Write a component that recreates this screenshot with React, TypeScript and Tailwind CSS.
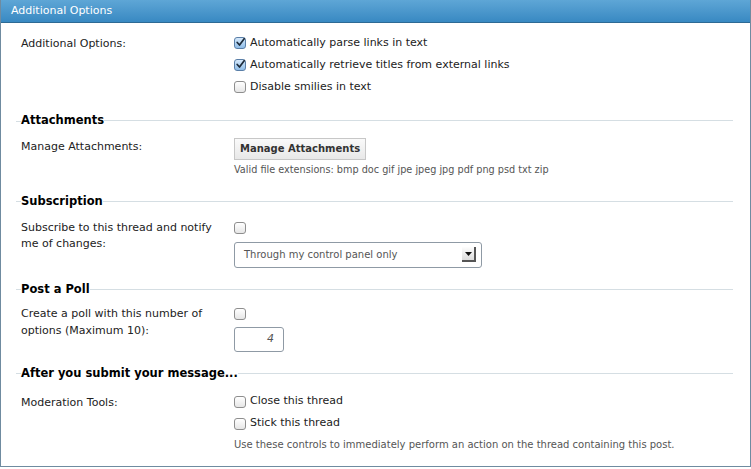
import * as React from 'react'

const font = { fontFamily: '"DejaVu Sans", Verdana, sans-serif' }

function Box({ checked = false }: { checked?: boolean }) {
    return (
        <span
            className={
                'inline-flex items-center justify-center w-[12px] h-[12px] shrink-0 rounded-[3px] border ' +
                (checked
                    ? 'border-[#5a7fa8] bg-gradient-to-b from-[#d6e9fb] to-[#8fbde8]'
                    : 'border-[#8e8e8e] bg-gradient-to-b from-[#ffffff] to-[#e6e6e6]')
            }
        >
            {checked && (
                <svg width="11" height="11" viewBox="0 0 11 11" className="-mt-[2px] ml-[1px]">
                    <path d="M1.5 5.5 L4.3 8.6 L10 0.8" fill="none" stroke="#1d2c3c" strokeWidth="2.1" strokeLinecap="round" strokeLinejoin="round" />
                </svg>
            )}
        </span>
    )
}

function Check({ label, checked }: { label: string; checked?: boolean }) {
    return (
        <div className="flex items-center gap-[4px] h-[22px] text-[11px] text-[#222]">
            <Box checked={checked} />
            <span>{label}</span>
        </div>
    )
}

function Legend({ title }: { title: string }) {
    return (
        <div className="flex items-center pl-[15px] pr-[17px] h-[22px]">
            <div className="w-[5px] h-px bg-[#d5dee3]" />
            <span className="text-[11.5px] font-bold text-black leading-none">{title}</span>
            <div className="flex-1 h-px bg-[#d5dee3] -mt-px" />
        </div>
    )
}

function Row({ label, labelClass, children }: { label: React.ReactNode; labelClass: string; children: React.ReactNode }) {
    return (
        <div className="flex pl-[20px]">
            <div className={'w-[213px] text-[11px] text-[#222] ' + labelClass}>{label}</div>
            <div className="flex-1">{children}</div>
        </div>
    )
}

export default function App() {
    return (
        <div className="w-[751px] h-[469px] bg-white" style={font}>
            <div className="h-[467px] border border-t-0 border-[#6f8ba0] flex flex-col">
                <div className="h-[23px] bg-gradient-to-b from-[#5ea6d6] to-[#3889c2] border-b border-[#2d6a94] flex items-center pl-[10px] text-[11px] text-white">
                    Additional Options
                </div>

                <div className="pt-[9px]">
                    <Row label="Additional Options:" labelClass="leading-[17px] pt-[3px]">
                        <Check label="Automatically parse links in text" checked />
                        <Check label="Automatically retrieve titles from external links" checked />
                        <Check label="Disable smilies in text" />
                    </Row>
                </div>

                <div className="mt-[12px]">
                    <Legend title="Attachments" />
                    <Row label="Manage Attachments:" labelClass="leading-[17px] pt-[6px]">
                        <div className="pt-[3px]">
                            <div className="inline-flex items-center h-[22px] px-[5px] border border-[#c7c7c7] bg-gradient-to-b from-[#fafafa] to-[#e8e8e8] text-[10px] font-bold text-[#333]">
                                Manage Attachments
                            </div>
                            <div className="text-[9.7px] leading-[12px] text-[#555] mt-[4px]">
                                Valid file extensions: bmp doc gif jpe jpeg jpg pdf png psd txt zip
                            </div>
                        </div>
                    </Row>
                </div>

                <div className="mt-[15px]">
                    <Legend title="Subscription" />
                    <Row label={<>Subscribe to this thread and notify<br />me of changes:</>} labelClass="leading-[16px] pt-[7px]">
                        <div className="h-[22px] flex items-center mt-[4px]">
                            <Box />
                        </div>
                        <div className="mt-[3px] w-[248px] h-[26px] border border-[#8f9aa5] rounded-[3px] flex items-center justify-between pl-[9px] pr-[5px] text-[10px] text-[#555]">
                            <span>Through my control panel only</span>
                            <span className="w-[14px] h-[15px] bg-gradient-to-b from-[#fdfdfd] to-[#dcdcdc] border-r-2 border-b-2 border-[#555] flex items-center justify-center">
                                <svg width="7" height="4" viewBox="0 0 7 4">
                                    <path d="M0 0 H7 L3.5 4 Z" fill="#111" />
                                </svg>
                            </span>
                        </div>
                    </Row>
                </div>

                <div className="mt-[11px]">
                    <Legend title="Post a Poll" />
                    <Row label={<>Create a poll with this number of<br />options (Maximum 10):</>} labelClass="leading-[17px] pt-[4px]">
                        <div className="h-[22px] flex items-center mt-[2px]">
                            <Box />
                        </div>
                        <div className="mt-[2px] w-[50px] h-[25px] border border-[#8f9aa5] rounded-[3px] flex items-center justify-end pr-[9px] text-[11px] italic text-[#555]">
                            4
                        </div>
                    </Row>
                </div>

                <div className="mt-[11px]">
                    <Legend title="After you submit your message..." />
                    <Row label="Moderation Tools:" labelClass="leading-[17px] pt-[9px]">
                        <div className="pt-[6px]">
                            <Check label="Close this thread" />
                            <Check label="Stick this thread" />
                            <div className="text-[10px] leading-[12px] text-[#555] mt-[4px]">
                                Use these controls to immediately perform an action on the thread containing this post.
                            </div>
                        </div>
                    </Row>
                </div>
            </div>
        </div>
    )
}
